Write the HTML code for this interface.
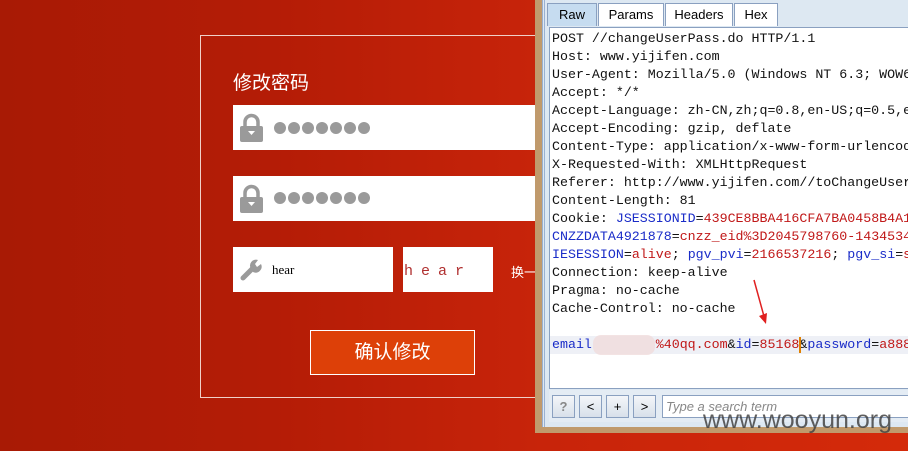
<!DOCTYPE html>
<html><head><meta charset="utf-8"><style>
*{margin:0;padding:0;box-sizing:border-box}
body{width:908px;height:451px;overflow:hidden;position:relative;background:linear-gradient(90deg,#a81a05 0%,#b41c06 30%,#c8240a 60%,#d42a0a 100%);font-family:"Liberation Sans","Noto Sans CJK SC",sans-serif}
.abs{position:absolute}
.frame{left:200px;top:35px;width:345px;height:363px;border:1px solid #f0d0c8}
.title{left:233px;top:68px;color:#fff;font-size:19px}
.inp{background:#fff}
.dot{position:absolute;width:12px;height:12px;border-radius:50%;background:#9a9a9a}
.btn{left:310px;top:330px;width:165px;height:45px;border:1px solid #fff;background:#dd4008;color:#fff;font-size:19px;text-align:center;line-height:43px}
.burp{left:535px;top:0;width:373px;height:433px;background:#c09a6c}
.inner{left:542px;top:0;width:366px;height:427px;background:#dde8f2;border-left:3px double #9ab0d0}
.txt{left:549px;top:27px;width:359px;height:362px;background:#fff;border:1px solid #8aa0c0;border-right:none}
.mono{font-family:"Liberation Mono","Noto Sans CJK SC",monospace;font-size:13.3px;white-space:pre;line-height:18px;color:#111}
.tab{top:3px;height:23px;border:1px solid #8aa0c0;border-bottom:none;background:#fff;font-size:13px;line-height:21px;text-align:center;color:#000}
.b{color:#1a2cc8}.r{color:#c01818}
.sb{top:395px;width:23px;height:23px;border:1px solid #8aa0c0;background:linear-gradient(#f4f6f9,#d8e0ea);text-align:center;font-size:13px;line-height:21px}
</style></head><body>
<div class="abs frame"></div>
<div class="abs title">修改密码</div>
<div class="abs inp" style="left:233px;top:105px;width:310px;height:45px"></div>
<div class="abs inp" style="left:233px;top:176px;width:310px;height:45px"></div>
<svg class="abs" style="left:239px;top:113px" width="26" height="30"><path d="M6 13V9a6.5 6.5 0 0 1 13 0v4" stroke="#9a9a9a" stroke-width="3.5" fill="none"/><rect x="1" y="13" width="23" height="16" rx="2" fill="#9a9a9a"/><path d="M9 18h7l-3.5 4z" fill="#fff"/></svg>
<svg class="abs" style="left:239px;top:184px" width="26" height="30"><path d="M6 13V9a6.5 6.5 0 0 1 13 0v4" stroke="#9a9a9a" stroke-width="3.5" fill="none"/><rect x="1" y="13" width="23" height="16" rx="2" fill="#9a9a9a"/><path d="M9 18h7l-3.5 4z" fill="#fff"/></svg>
<div class="abs" style="left:274px;top:122px">
<i class="dot" style="left:0"></i><i class="dot" style="left:14px"></i><i class="dot" style="left:28px"></i><i class="dot" style="left:42px"></i><i class="dot" style="left:56px"></i><i class="dot" style="left:70px"></i><i class="dot" style="left:84px"></i></div>
<div class="abs" style="left:274px;top:192px">
<i class="dot" style="left:0"></i><i class="dot" style="left:14px"></i><i class="dot" style="left:28px"></i><i class="dot" style="left:42px"></i><i class="dot" style="left:56px"></i><i class="dot" style="left:70px"></i><i class="dot" style="left:84px"></i></div>
<div class="abs inp" style="left:233px;top:247px;width:160px;height:45px"></div>
<svg class="abs" style="left:238px;top:257px" width="26" height="26"><path d="M5 21L15 11" stroke="#9a9a9a" stroke-width="5" stroke-linecap="round"/><path d="M13 12a6 6 0 0 1 7-9l-3 4 2 3 4-3a6 6 0 0 1-8 8z" fill="#9a9a9a"/></svg>
<div class="abs" style="left:272px;top:262px;font-family:'Liberation Serif',serif;font-size:13px">hear</div>
<div class="abs inp" style="left:403px;top:247px;width:90px;height:45px;color:#b03030;font-family:'Liberation Mono',monospace;font-size:15px;padding:16px 0 0 1px;letter-spacing:8px">hear</div>
<div class="abs" style="left:511px;top:262px;color:#fff;font-size:13px">换一</div>
<div class="abs btn">确认修改</div>
<div class="abs burp"></div>
<div class="abs inner"></div>
<div class="abs tab" style="left:547px;width:50px;background:#c6dcf0">Raw</div>
<div class="abs tab" style="left:598px;width:66px">Params</div>
<div class="abs tab" style="left:665px;width:68px">Headers</div>
<div class="abs tab" style="left:734px;width:44px">Hex</div>
<div class="abs txt"></div>
<div class="abs" style="left:550px;top:336px;width:358px;height:18px;background:#eef0f6"></div>
<div class="abs mono" style="left:552px;top:30px">POST //changeUserPass.do HTTP/1.1
Host: www.yijifen.com
User-Agent: Mozilla/5.0 (Windows NT 6.3; WOW64
Accept: */*
Accept-Language: zh-CN,zh;q=0.8,en-US;q=0.5,e
Accept-Encoding: gzip, deflate
Content-Type: application/x-www-form-urlencod
X-Requested-With: XMLHttpRequest
Referer: http://www.yijifen.com//toChangeUser
Content-Length: 81
Cookie: <span class="b">JSESSIONID</span>=<span class="r">439CE8BBA416CFA7BA0458B4A1</span>
<span class="b">CNZZDATA4921878</span>=<span class="r">cnzz_eid%3D2045798760-1434534</span>
<span class="b">IESESSION</span>=<span class="r">alive</span>; <span class="b">pgv_pvi</span>=<span class="r">2166537216</span>; <span class="b">pgv_si</span>=<span class="r">s</span>
Connection: keep-alive
Pragma: no-cache
Cache-Control: no-cache

<span class="b">email</span>        <span class="r">%40qq.com</span>&amp;<span class="b">id</span>=<span class="r">85168</span>&amp;<span class="b">password</span>=<span class="r">a888</span></div>
<div class="abs" style="left:593px;top:335px;width:62px;height:20px;background:#f0dcdc;border-radius:8px;opacity:.8"></div>
<div class="abs" style="left:799px;top:337px;width:2px;height:16px;background:#e08000"></div>
<svg class="abs" style="left:750px;top:278px" width="20" height="50"><path d="M4 2L15 42" stroke="#e02020" stroke-width="1.5"/><path d="M9 38l7 8 1-11z" fill="#e02020"/></svg>
<div class="abs" style="left:549px;top:390px;width:359px;height:32px;background:#e4ecf4"></div>
<div class="abs sb" style="left:552px;color:#888;font-weight:bold">?</div>
<div class="abs sb" style="left:579px">&lt;</div>
<div class="abs sb" style="left:606px">+</div>
<div class="abs sb" style="left:633px">&gt;</div>
<div class="abs" style="left:662px;top:395px;width:246px;height:23px;background:#fff;border:1px solid #8aa0c0;border-right:none;font-style:italic;color:#888;font-size:13px;padding:3px 3px">Type a search term</div>
<div class="abs" style="left:703px;top:406px;font-size:25px;color:#444;opacity:.85">www.wooyun.org</div>
</body></html>
